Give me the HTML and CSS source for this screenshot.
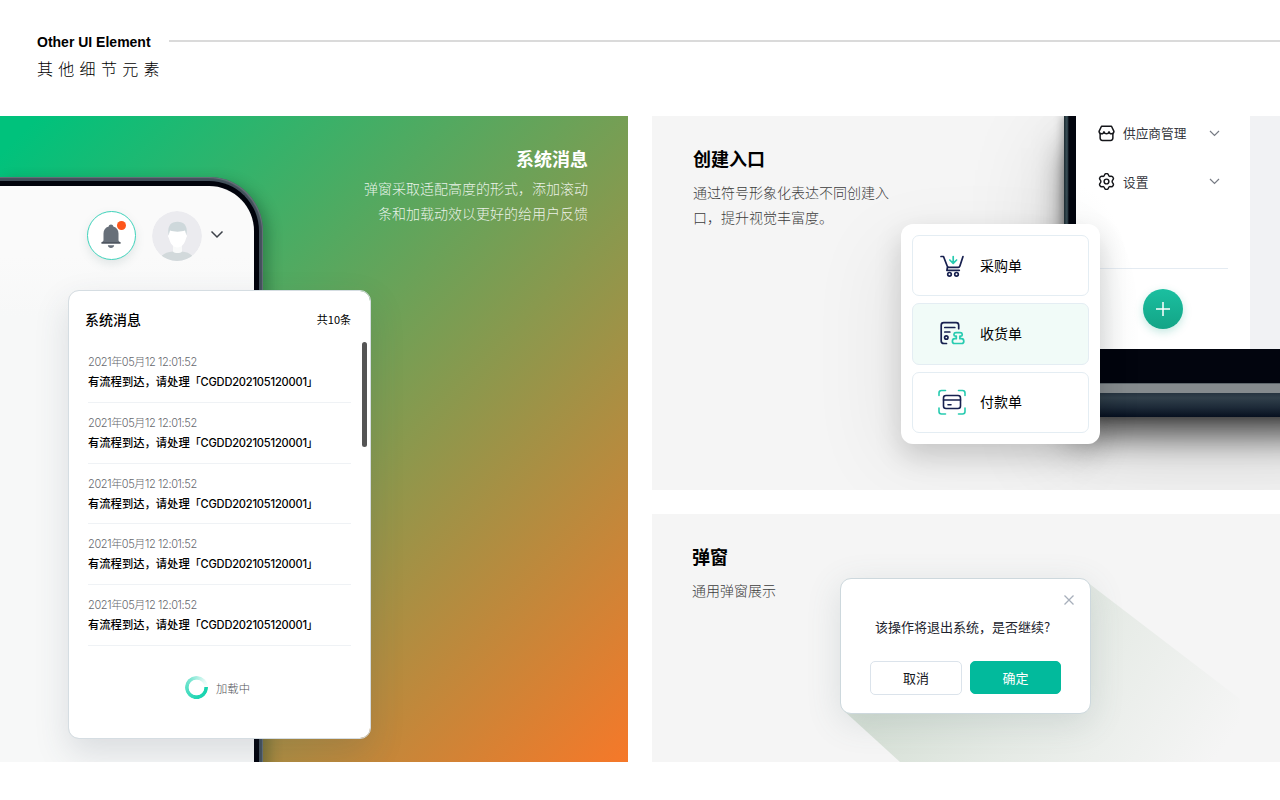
FILE: index.html
```html
<!DOCTYPE html>
<html lang="zh-CN">
	<head>
		<meta charset="UTF-8">
		<title>Other UI Element</title>
		<link rel="stylesheet" href="styles.css">
	</head>
	<body>
		<!--标题-->
		<div class="header">
			<div class="headTop">
				<h1>Other UI Element</h1>
				<span class="line"></span>
			</div>
			<p class="sub">其他细节元素</p>
		</div>
		<div class="main">
			<!--系统消息-->
			<div class="panel news">
				<div class="phone">
					<div class="screen">
						<div class="bell">
							<svg width="24" height="28" viewBox="0 0 24 28">
								<path d="M12 1.500c1.300 0 2 .7 2.300 1.900 3.600 1.100 5.200 3.800 5.200 7.200v6.400c0 1 .6 1.700 2 2.400v1.100h-19v-1.100c1.400-.7 2-1.400 2-2.400v-6.400c0-3.400 1.600-6.100 5.200-7.200.3-1.200 1-1.900 2.300-1.900z" fill="#676f79"/>
								<path d="M2.500 19.300h19v1.200h-19z" fill="#454c56"/>
								<path d="M8.800 22.300h6.400c-.4 1.700-1.500 2.700-3.200 2.700s-2.800-1-3.200-2.700z" fill="#676f79"/>
							</svg>
							<i class="dot"></i>
						</div>
						<svg class="avatar" width="50" height="50" viewBox="0 0 50 50">
							<defs><clipPath id="face"><circle cx="25" cy="25" r="25"/></clipPath></defs>
							<g clip-path="url(#face)">
								<circle cx="25" cy="25" r="25" fill="#ebebef"/>
								<path d="M7 50c1-6 7-9 14-9.500h8.500c7 .5 12 3.500 13.500 9.500z" fill="#d2d9db"/>
								<path d="M21 33h9v7.500c-1.500 2-7.500 2-9 0z" fill="#f9fafa"/>
								<path d="M16.300 22c-.6-7.500 2.800-11.300 9.200-11.300S35.300 14.500 34.700 22l-1 3H17z" fill="#ced8db"/>
								<path d="M18 19.500c4 1.500 11 1.500 15 0l1.300 4.500c1 0 .9 2-.2 3-1.200 5.600-4.300 9.500-8.600 9.500s-7.400-3.900-8.600-9.500c-1.100-1-1.200-3-.2-3z" fill="#fff"/>
							</g>
						</svg>
						<svg class="down" width="14" height="9" viewBox="0 0 14 9"><path d="M1.500 1.500L7 7l5.500-5.500" fill="none" stroke="#3c4048" stroke-width="1.500"/></svg>
					</div>
				</div>
				<div class="intro">
					<h2>系统消息</h2>
					<p>弹窗采取适配高度的形式，添加滚动<br>条和加载动效以更好的给用户反馈</p>
				</div>
				<!--消息弹窗-->
				<div class="newsPop">
					<div class="popHead">
						<h3>系统消息</h3>
						<span>共10条</span>
					</div>
					<ul class="list">
						<li><p class="time">2021年05月12 12:01:52</p><p class="text">有流程到达，请处理<span>「CGDD202105120001」</span></p></li>
						<li><p class="time">2021年05月12 12:01:52</p><p class="text">有流程到达，请处理<span>「CGDD202105120001」</span></p></li>
						<li><p class="time">2021年05月12 12:01:52</p><p class="text">有流程到达，请处理<span>「CGDD202105120001」</span></p></li>
						<li><p class="time">2021年05月12 12:01:52</p><p class="text">有流程到达，请处理<span>「CGDD202105120001」</span></p></li>
						<li><p class="time">2021年05月12 12:01:52</p><p class="text">有流程到达，请处理<span>「CGDD202105120001」</span></p></li>
					</ul>
					<div class="loading"><i class="ring"></i>加载中</div>
					<i class="scroll"></i>
				</div>
			</div>
			<div class="side">
				<!--创建入口-->
				<div class="panel create">
					<div class="intro">
						<h2>创建入口</h2>
						<p>通过符号形象化表达不同创建入<br>口，提升视觉丰富度。</p>
					</div>
					<div class="laptop">
						<div class="view">
							<div class="menu">
								<div class="menuItem">
									<svg width="17" height="17" viewBox="0.500 0.500 16 16" fill="none" stroke="#15161a" stroke-width="1.400" stroke-linejoin="round">
										<path d="M2.500 8.500v4.300c0 1.500.8 2.200 2.200 2.200h7.600c1.400 0 2.200-.7 2.200-2.200V8.500"/>
										<path d="M3.800 1.700h9.400l2.300 4.800c-.1 1.500-1 2.300-2.200 2.300S11 8 10.900 6.800C10.600 8 9.800 8.800 8.500 8.800S6.400 8 6.100 6.800C6 8 4.900 8.800 3.700 8.800S1.600 8 1.500 6.500z"/>
									</svg>
									<span>供应商管理</span>
									<svg width="11" height="7" viewBox="0 0 11 7"><path d="M1 1l4.500 4.500L10 1" fill="none" stroke="#777b84" stroke-width="1.200"/></svg>
								</div>
								<div class="menuItem">
									<svg width="17" height="17" viewBox="1 1 15 15" fill="none" stroke="#15161a" stroke-width="1.300" stroke-linejoin="round">
										<path d="M6.700 2.900c.2-1 .7-1.400 1.800-1.400s1.600.4 1.800 1.400c.2.900.9 1.300 1.800 1 1-.3 1.700 0 2.200.9.600 1 .4 1.700-.3 2.400-.7.700-.7 1.900 0 2.600.7.700.9 1.400.3 2.400-.5.900-1.200 1.200-2.200.9-.9-.3-1.600.1-1.800 1-.2 1-.7 1.400-1.800 1.400s-1.600-.4-1.800-1.400c-.2-.9-.9-1.300-1.800-1-1 .3-1.700 0-2.200-.9-.6-1-.4-1.700.3-2.400.7-.7.7-1.900 0-2.600-.7-.7-.9-1.400-.3-2.400.5-.9 1.200-1.200 2.200-.9.900.3 1.600-.1 1.800-1z"/>
										<circle cx="8.500" cy="8.500" r="2.100"/>
									</svg>
									<span>设置</span>
									<svg width="11" height="7" viewBox="0 0 11 7"><path d="M1 1l4.500 4.500L10 1" fill="none" stroke="#777b84" stroke-width="1.200"/></svg>
								</div>
								<div class="menuFoot">
									<div class="plus"><svg width="16" height="16" viewBox="0 0 16 16"><path d="M8 1v14M1 8h14" stroke="#fff" stroke-width="1.500"/></svg></div>
								</div>
							</div>
						</div>
						<div class="edge"></div>
						<div class="base"></div>
					</div>
					<!--单据菜单-->
					<ul class="createPop">
						<li>
							<svg width="28" height="28" viewBox="0 0 28 28" fill="none" stroke="#17204f" stroke-width="1.700" stroke-linecap="round" stroke-linejoin="round">
								<path d="M3 4.500h2.500L9.200 14c.3 1 .9 1.300 1.800 1.300h9.300c.9 0 1.300-.4 1.600-1.300L25 4.500M9.500 15l-.6 3.300h12.400"/>
								<circle cx="11.500" cy="22.300" r="1.800"/><circle cx="18.500" cy="22.300" r="1.800"/>
								<path d="M15.200 4.500v6.500M11.800 8l3.400 3.300L18.600 8" stroke="#27cbb0"/>
							</svg>
							<span>采购单</span>
						</li>
						<li class="active">
							<svg width="28" height="28" viewBox="0 0 28 28" fill="none" stroke="#17204f" stroke-width="1.700" stroke-linecap="round" stroke-linejoin="round">
								<path d="M8.500 23.500H6c-2 0-2.800-.8-2.800-2.500V5.200c0-1.700.8-2.500 2.500-2.500h12.500c1.700 0 2.500.8 2.500 2.500v3.500M6.800 7.500h10M6.800 12h5"/>
								<circle cx="8.300" cy="17.500" r="1.700"/>
								<path d="M18 12.700h4.200c2.600 0 2.700 3.100.6 3.500h-.9v2.500h1.500c1.800 0 2.400 1.300 2.400 2.500s-.6 2.300-2 2.300h-7.400c-1.400 0-2-1.100-2-2.300s.6-2.500 2.400-2.500h1.500v-2.500h-.9c-2.100-.4-2-3.500.6-3.500z" stroke="#27cbb0"/>
							</svg>
							<span>收货单</span>
						</li>
						<li>
							<svg width="28" height="28" viewBox="0 0 28 28" fill="none" stroke="#17204f" stroke-width="1.600" stroke-linecap="round" stroke-linejoin="round">
								<rect x="5.500" y="7.500" width="17" height="13" rx="2.500"/><path d="M5.500 12h17M10 16.700h3"/>
								<path d="M1 7.500V5c0-1.600.9-2.500 2.500-2.500h4M20.500 2.500h4c1.600 0 2.500.9 2.500 2.500v2.500M1 20v3.500C1 25.100 1.900 26 3.500 26h4M20.500 26h4c1.600 0 2.500-.9 2.500-2.500V20" stroke="#27cbb0"/>
							</svg>
							<span>付款单</span>
						</li>
					</ul>
				</div>
				<!--弹窗-->
				<div class="panel modal">
					<div class="intro">
						<h2>弹窗</h2>
						<p>通用弹窗展示</p>
					</div>
					<div class="shade"></div>
					<div class="dialog">
						<svg class="close" width="12" height="12" viewBox="0 0 12 12"><path d="M1.500 1.500l9 9M10.500 1.500l-9 9" stroke="#a7afbb" stroke-width="1.300"/></svg>
						<p>该操作将退出系统，是否继续?</p>
						<div class="btns">
							<div class="btn">取消</div>
							<div class="btn ok">确定</div>
						</div>
					</div>
				</div>
			</div>
		</div>
	</body>
</html>
```
FILE: styles.css
```css
*{
	margin: 0;
	padding: 0;
	list-style: none;
	box-sizing: border-box;
}
body{
	height: 800px;
	overflow: hidden;
	background: #fff;
	font-family: "Noto Sans CJK SC",sans-serif;
	color: #000;
}
svg{
	display: block;
	flex: none;
}
/*标题*/
.header{
	height: 116px;
	padding: 32px 0 0 37px;
}
.headTop{
	display: flex;
	align-items: center;
	height: 20px;
}
.headTop h1{
	width: 132px;
	font: bold 14px/20px "Liberation Sans",sans-serif;
	white-space: nowrap;
}
.line{
	flex: 1;
	height: 2px;
	margin-top: -3px;
	background: #dadada;
}
.sub{
	margin-top: 4px;
	font-size: 16px;
	line-height: 24px;
	font-weight: 300;
	letter-spacing: 5.3px;
}
.main{
	display: flex;
	gap: 24px;
	height: 646px;
}
.panel{
	position: relative;
	overflow: hidden;
	display: flex;
	background: #f5f5f5;
}
.side{
	display: flex;
	flex-direction: column;
	gap: 24px;
	width: 628px;
}
.intro{
	flex: none;
}
.intro h2{
	font-size: 18px;
	line-height: 26px;
	font-weight: 700;
}
.intro p{
	font-size: 14px;
	line-height: 25px;
	font-weight: 300;
	color: #3c3c3c;
	white-space: nowrap;
}
/*系统消息*/
.news{
	width: 628px;
	justify-content: space-between;
	background: linear-gradient(135deg,#00c27c 3%,#f67829 100%);
}
.news .intro{
	padding: 29px 40px 0 0;
	text-align: right;
	color: #fff;
}
.news .intro p{
	margin-top: 5px;
	color: rgba(255,255,255,0.88);
}
.phone{
	width: 263px;
	height: 640px;
	margin-top: 61px;
	padding: 4px 4px 0 0;
	border-radius: 0 54px 0 0;
	background: #43505b;
	box-shadow: inset -1px 1px 1px #68727b, 6px 4px 14px rgba(0,40,20,0.3);
}
.screen{
	display: flex;
	height: 640px;
	padding: 26px 0 0 87px;
	border: solid #01030c;
	border-width: 5px 5px 0 0;
	border-radius: 0 50px 0 0;
	background: linear-gradient(#fafafa,#fafafa 70px,#f7f8f8 130px,#f7f8f8);
}
.bell{
	position: relative;
	width: 49px;
	height: 49px;
	margin-top: -1px;
	padding: 11px 0 0 11px;
	border: 1px solid #3fd3bb;
	border-radius: 50%;
	background: #fff;
	box-shadow: 0 4px 10px rgba(100,130,130,0.16);
}
.dot{
	position: absolute;
	left: 29px;
	top: 9px;
	width: 9px;
	height: 9px;
	border-radius: 50%;
	background: #fd561c;
}
.avatar{
	margin-left: 16px;
	margin-top: -1px;
}
.down{
	margin: 18px 0 0 8px;
}
.newsPop{
	position: absolute;
	left: 68px;
	top: 174px;
	width: 303px;
	height: 449px;
	padding: 17px 19px 0 19px;
	border: 1px solid #d5dde2;
	border-radius: 11px;
	background: #fff;
	background-clip: padding-box;
	box-shadow: 0 14px 34px rgba(55,70,85,0.15);
}
.popHead{
	display: flex;
	justify-content: space-between;
	align-items: center;
	height: 22px;
	margin-left: -3px;
	font-size: 11px;
	font-weight: 400;
}
.popHead h3{
	font-size: 14px;
	font-weight: 500;
}
.list{
	margin-top: 12px;
}
.list li{
	height: 60.8px;
	padding-top: 11px;
	border-bottom: 1px solid #eff2f5;
	white-space: nowrap;
}
.time{
	font: 300 11px/18px Inter,"Noto Sans CJK SC",sans-serif;
	letter-spacing: -0.37px;
	color: #66686e;
}
.text{
	font: 500 11.3px/18px Inter,"Noto Sans CJK SC",sans-serif;
	margin-top: 2px;
}
.text span{
	font-size: 11.1px;
	letter-spacing: -0.2px;
}
.loading{
	display: flex;
	align-items: center;
	justify-content: center;
	gap: 8px;
	height: 24px;
	margin: 30px 4px 0 0;
	font-size: 11.3px;
	font-weight: 300;
	color: #4f5258;
}
.ring{
	width: 23px;
	height: 23px;
	border-radius: 50%;
	background: conic-gradient(from 90deg,#15d3ae,#22d6b3 25%,#7ce6d2 65%,#e5faf6 90%,#fff);
	-webkit-mask: radial-gradient(circle,transparent 7.500px,#000 8.200px);
	mask: radial-gradient(circle,transparent 7.500px,#000 8.200px);
}
.scroll{
	position: absolute;
	right: 3px;
	top: 51px;
	width: 5px;
	height: 105px;
	border-radius: 3px;
	background: #555;
}
/*创建入口*/
.create{
	height: 374px;
}
.create .intro{
	width: 412px;
	padding: 29px 0 0 41px;
}
.create .intro p{
	margin-top: 9px;
}
.laptop{
	flex: none;
	width: 300px;
	height: 301px;
	background: #02050e;
	box-shadow: -2px 0 8px rgba(0,0,0,0.25), 0 24px 34px -8px rgba(0,0,0,0.75), 0 30px 100px rgba(0,0,0,0.16);
}
.view{
	height: 233px;
	margin-bottom: 34px;
	padding-left: 12px;
	background: linear-gradient(90deg,#1c2b31,#3b5058 3px,#02050e 5px,#02050e 12px,#f1f2f4 12px);
}
.menu{
	width: 174px;
	height: 233px;
	background: radial-gradient(ellipse 60px 140px at 0 210px,#f2f4f4,#fff) #fff;
}
.menuItem{
	display: flex;
	align-items: center;
	height: 49px;
	padding: 0 30px 0 22px;
	font-size: 12.7px;
	color: #363840;
}
.menuItem:first-child{
	height: 41px;
	padding-bottom: 7px;
}
.menuItem span{
	flex: 1;
	margin: -1px 0 0 8px;
}
.menuFoot{
	display: flex;
	justify-content: center;
	margin: 62px 22px 0;
	padding-top: 20px;
	border-top: 1px solid #e4ebf2;
}
.plus{
	display: flex;
	align-items: center;
	justify-content: center;
	width: 40px;
	height: 40px;
	border-radius: 50%;
	background: linear-gradient(#1bbfa0,#13a486);
	box-shadow: 0 3px 8px rgba(19,164,134,0.25);
}
.edge{
	height: 10px;
	border-top: 1px solid #5d666b;
	background: #858b8e;
}
.base{
	height: 24px;
	background: linear-gradient(#263440,#31404b 20%,#1d2a38 60%,#07101f);
}
.createPop{
	position: absolute;
	left: 249px;
	top: 108px;
	display: flex;
	flex-direction: column;
	gap: 7px;
	width: 199px;
	height: 220px;
	padding: 11px;
	border-radius: 12px;
	background: #fff;
	box-shadow: 0 12px 28px rgba(0,0,0,0.16), -20px 20px 80px rgba(0,0,0,0.06);
}
.createPop li{
	display: flex;
	align-items: center;
	gap: 14px;
	height: 61.3px;
	padding-left: 25px;
	border: 1px solid #e4edf3;
	border-radius: 7px;
	font-size: 14px;
}
.createPop span{
	margin-top: -2px;
}
.createPop .active{
	background: #f1fbf8;
}
/*弹窗*/
.modal{
	height: 248px;
}
.modal .intro{
	padding: 29px 0 0 40px;
}
.modal .intro p{
	margin-top: 9px;
}
.shade{
	position: absolute;
	left: 188px;
	top: 64px;
	width: 400px;
	height: 184px;
	clip-path: polygon(247px 4px,400px 121px,400px 184px,60px 184px,3px 132px);
	background: linear-gradient(125deg,rgba(204,217,204,0.75) 25%,rgba(217,226,217,0.6) 52%,rgba(245,245,245,0) 95%);
}
.dialog{
	position: absolute;
	left: 188px;
	top: 64px;
	width: 251px;
	height: 136px;
	padding: 37px 29px 0;
	border: 1px solid #cdd8dd;
	border-radius: 11px;
	background: #fff;
	box-shadow: 0 8px 34px rgba(80,105,115,0.16);
	font-size: 13px;
	text-align: center;
}
.dialog p{
	margin: 0 -7px 0 -13px;
	line-height: 22px;
	white-space: nowrap;
	color: #20222c;
}
.close{
	position: absolute;
	right: 15px;
	top: 15px;
}
.btns{
	display: flex;
	justify-content: space-between;
	margin-top: 23px;
}
.btn{
	width: 92px;
	height: 34px;
	border: 1px solid #dbe3eb;
	border-radius: 5px;
	line-height: 32px;
	color: #15161c;
}
.ok{
	width: 91px;
	height: 33px;
	border-color: #02ba9c;
	background: #02ba9c;
	color: #fff;
}
```
